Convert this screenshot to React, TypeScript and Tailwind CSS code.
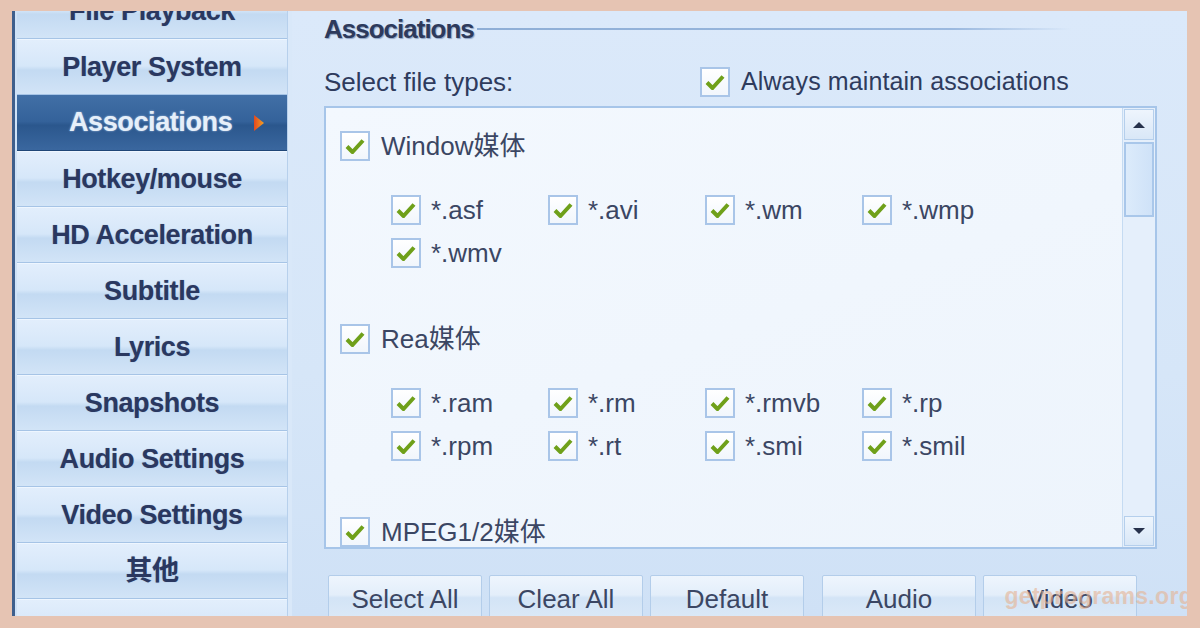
import React from 'react';

const sideItems = [
  'File Playback',
  'Player System',
  'Associations',
  'Hotkey/mouse',
  'HD Acceleration',
  'Subtitle',
  'Lyrics',
  'Snapshots',
  'Audio Settings',
  'Video Settings',
  '其他',
  '',
];

const groups = [
  { name: 'Window媒体', types: ['*.asf', '*.avi', '*.wm', '*.wmp', '*.wmv'] },
  { name: 'Rea媒体', types: ['*.ram', '*.rm', '*.rmvb', '*.rp', '*.rpm', '*.rt', '*.smi', '*.smil'] },
  { name: 'MPEG1/2媒体', types: [] as string[] },
];

function CheckBox() {
  return (
    <span className="flex h-[30px] w-[30px] shrink-0 items-center justify-center border-2 border-[#a9c5e8] bg-[linear-gradient(180deg,#ffffff_0%,#f1f6fc_100%)]">
      <svg width="22" height="18" viewBox="0 0 22 18">
        <path d="M3 9.5 L8.5 15 L19 3.5" fill="none" stroke="#6fa01a" strokeWidth="4" strokeLinejoin="round" />
      </svg>
    </span>
  );
}

function SideItem({ label, active }: { label: string; active: boolean }) {
  if (active) {
    return (
      <div className="flex h-[56px] shrink-0 items-center border-b border-[#1f4677] bg-[linear-gradient(180deg,#416fa6_0%,#34629a_48%,#2b578d_55%,#3a679f_100%)] pl-[52px]">
        <span className="text-[27px] font-bold tracking-[-0.4px] text-[#e6eff9] [text-shadow:0_0_2px_#a9c3e2]">{label}</span>
        <svg className="ml-[21px]" width="12" height="18" viewBox="0 0 12 18">
          <defs>
            <linearGradient id="arr" x1="0" y1="0" x2="1" y2="0">
              <stop offset="0" stopColor="#e4481f" />
              <stop offset="1" stopColor="#f4a222" />
            </linearGradient>
          </defs>
          <path d="M1 1 L11 9 L1 17 Z" fill="url(#arr)" />
        </svg>
      </div>
    );
  }
  return (
    <div className="flex h-[56px] shrink-0 items-center justify-center border-t border-[#eef6ff] border-b border-b-[#a6c4e6] bg-[linear-gradient(180deg,#e2eefc_0%,#d6e7f9_48%,#c3daf2_56%,#d2e4f7_100%)]">
      <span className="text-[27px] font-bold tracking-[-0.4px] text-[#2a3860] [text-shadow:0_0_1px_#8da3c8]">{label}</span>
    </div>
  );
}

export default function App() {
  return (
    <div
      className="flex h-[628px] w-[1200px] bg-[#e6c4b3] pl-[12px] pr-[13px] pt-[11px] pb-[12px]"
      style={{ fontFamily: '"Liberation Sans", "Noto Sans CJK SC", sans-serif' }}
    >
      <div className="relative flex flex-1 overflow-hidden">
        {/* Sidebar */}
        <div className="flex w-[280px] shrink-0 overflow-hidden border-l-[3px] border-[#3f5f8c] bg-[#cfe2f7] pl-[2px]">
          <div className="-mt-[28px] flex w-[271px] flex-col">
            {sideItems.map((s) => (
              <SideItem key={s || 'blank'} label={s} active={s === 'Associations'} />
            ))}
          </div>
          <div className="w-[5px] bg-[#d9e8f9] border-l border-[#b7d0ec]" />
        </div>

        {/* Main panel */}
        <div className="flex flex-1 flex-col bg-[linear-gradient(180deg,#dbe9fa_0%,#d6e6f8_60%,#cfe1f6_100%)] pl-[32px] pr-[30px]">
          <div className="flex h-[36px] items-center pt-[0px]">
            <span className="text-[26px] font-bold tracking-[-1px] text-[#2d3a5c] [text-shadow:1px_1px_1px_#8ea4c4]">Associations</span>
            <div className="ml-[3px] h-[2px] w-[595px] bg-[linear-gradient(90deg,#8eaed6_0%,#9bb9df_80%,rgba(155,185,223,0)_100%)]" />
          </div>

          <div className="mt-[19px] flex h-[32px] items-center">
            <span className="w-[376px] text-[26px] text-[#2e3b5d]">Select file types:</span>
            <CheckBox />
            <span className="ml-[11px] text-[25px] tracking-[0.1px] text-[#2e3b5d]">Always maintain associations</span>
          </div>

          {/* List box */}
          <div className="mt-[8px] flex h-[445px] w-[833px] border-2 border-[#a6c5e9] bg-[linear-gradient(160deg,#f3f8fe_0%,#edf4fc_100%)]">
            <div className="flex flex-1 flex-col overflow-hidden pl-[14px] pt-[23px]">
              {groups.map((g, gi) => (
                <div key={g.name} className={gi > 0 ? 'mt-[56px]' : ''}>
                  <div className="flex h-[30px] items-center">
                    <CheckBox />
                    <span className="ml-[11px] text-[26px] text-[#3b4663]">{g.name}</span>
                  </div>
                  {g.types.length > 0 && (
                    <div className="mt-[34px] ml-[51px] grid grid-cols-[157px_157px_157px_157px] gap-y-[13px]">
                      {g.types.map((t) => (
                        <div key={t} className="flex h-[30px] items-center">
                          <CheckBox />
                          <span className="ml-[10px] text-[26px] text-[#3b4663]">{t}</span>
                        </div>
                      ))}
                    </div>
                  )}
                </div>
              ))}
            </div>

            {/* Scrollbar */}
            <div className="flex w-[33px] flex-col border-l border-[#c5dbf2] bg-[#e5effb] p-[1px]">
              <div className="flex h-[31px] items-center justify-center border border-[#b5cfec] bg-[linear-gradient(180deg,#eef5fd_0%,#d9e7f7_100%)]">
                <svg width="14" height="8" viewBox="0 0 14 8"><path d="M1 7 L7 1 L13 7 Z" fill="#27324c" /></svg>
              </div>
              <div className="mt-[2px] h-[75px] border-2 border-[#a9c7ea] bg-[linear-gradient(90deg,#dcebfb_0%,#cfe2f8_100%)]" />
              <div className="flex-1" />
              <div className="flex h-[30px] items-center justify-center border border-[#b5cfec] bg-[linear-gradient(180deg,#eef5fd_0%,#d9e7f7_100%)]">
                <svg width="14" height="8" viewBox="0 0 14 8"><path d="M1 1 L13 1 L7 7 Z" fill="#27324c" /></svg>
              </div>
            </div>
          </div>

          {/* Buttons */}
          <div className="mt-[26px] ml-[4px] flex gap-[7px]">
            {['Select All', 'Clear All', 'Default', 'Audio', 'Video'].map((b, i) => (
              <div
                key={b}
                className={`flex h-[44px] w-[154px] items-start justify-center rounded-[2px] border border-[#b3cdea] bg-[linear-gradient(180deg,#eef5fd_0%,#e3eefa_45%,#d3e4f6_52%,#dbe9f8_100%)] pt-[4px] text-[26px] text-[#3b4663] ${i === 3 ? 'ml-[11px]' : ''}`}
              >
                {b}
              </div>
            ))}
          </div>
        </div>

        {/* Watermark */}
        <span className="absolute bottom-[3px] right-[-6px] text-[23px] font-bold tracking-[0.3px] text-[#e6b392] opacity-60">
          getprograms.org
        </span>
      </div>
    </div>
  );
}
